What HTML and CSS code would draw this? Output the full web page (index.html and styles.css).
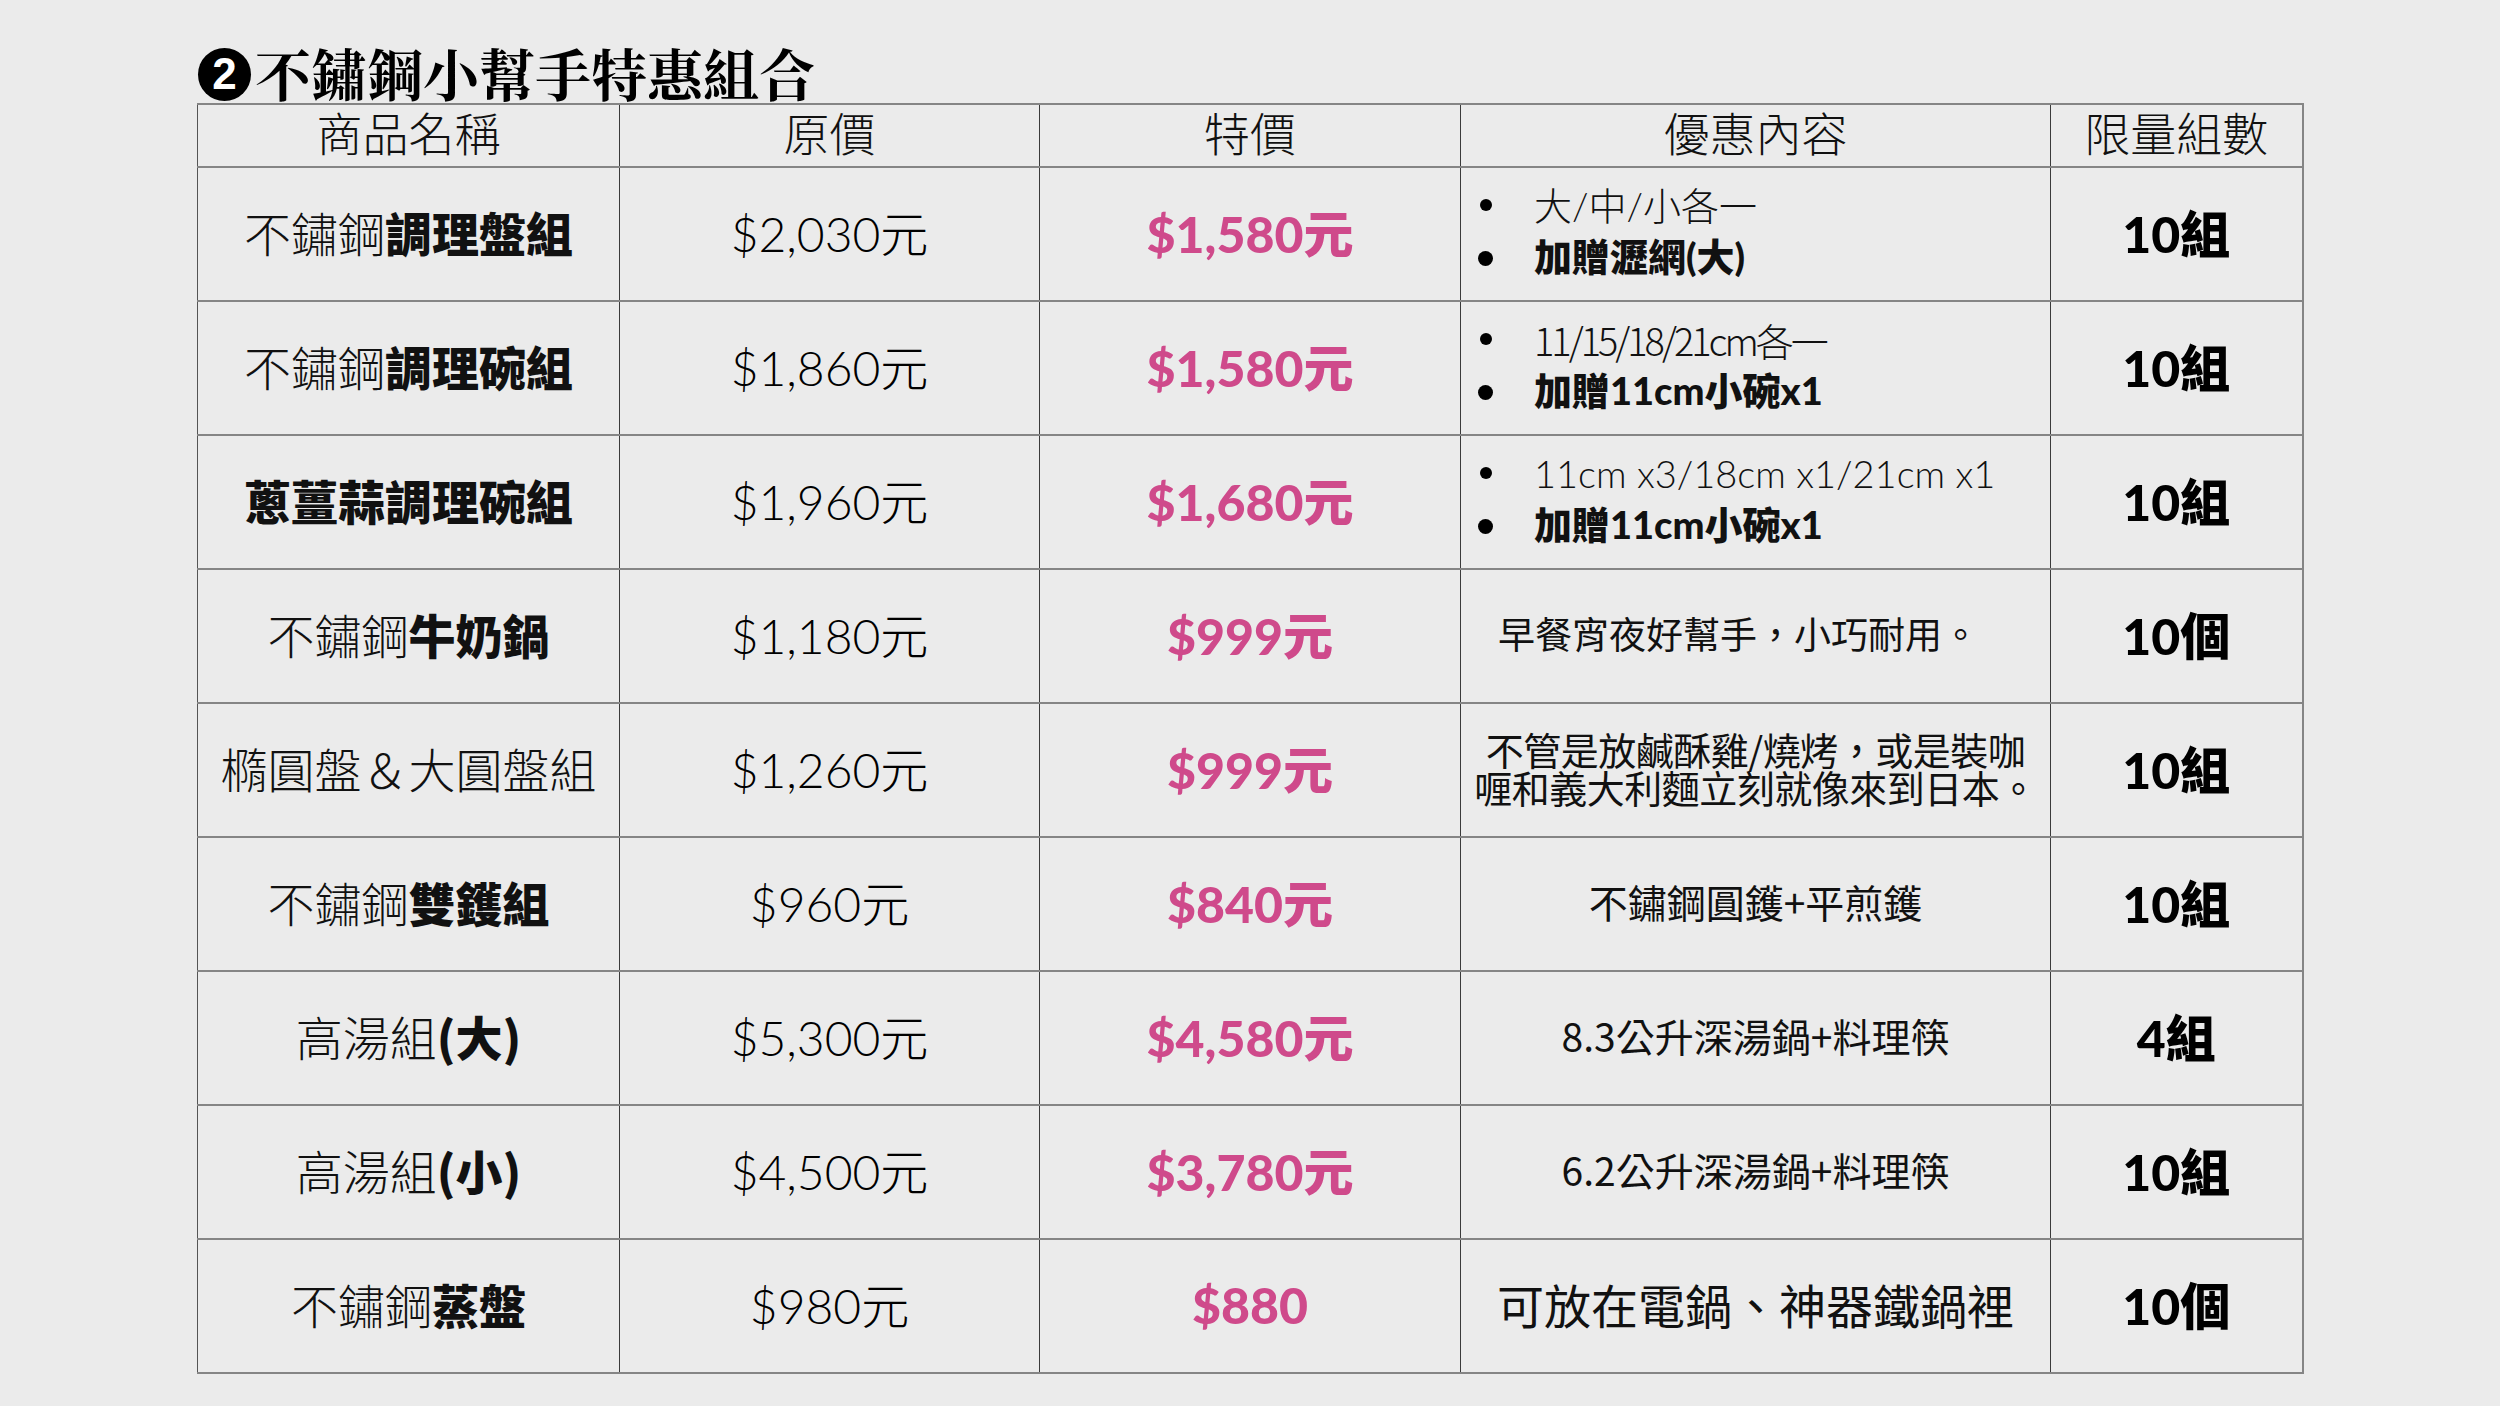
FILE: index.html
```html
<!DOCTYPE html>
<html lang="zh-Hant">
<head>
<meta charset="utf-8">
<title>不鏽鋼小幫手特惠組合</title>
<link rel="stylesheet" href="styles.css">
</head>
<body>
<div class="page">
  <h1 class="title"><span class="num">2</span>不鏽鋼小幫手特惠組合</h1>
  <table class="deals">
    <colgroup>
      <col class="c-name"><col class="c-orig"><col class="c-sale"><col class="c-desc"><col class="c-limit">
    </colgroup>
    <thead>
      <tr><th>商品名稱</th><th>原價</th><th>特價</th><th>優惠內容</th><th>限量組數</th></tr>
    </thead>
    <tbody>
      <tr>
        <td class="name">不鏽鋼<b>調理盤組</b></td>
        <td class="orig">$2,030元</td>
        <td class="sale">$1,580元</td>
        <td class="desc list"><ul><li>大/中/小各一</li><li class="strong">加贈瀝網(大)</li></ul></td>
        <td class="limit">10組</td>
      </tr>
      <tr>
        <td class="name">不鏽鋼<b>調理碗組</b></td>
        <td class="orig">$1,860元</td>
        <td class="sale">$1,580元</td>
        <td class="desc list"><ul><li class="narrow">11/15/18/21cm各一</li><li class="strong">加贈11cm小碗x1</li></ul></td>
        <td class="limit">10組</td>
      </tr>
      <tr>
        <td class="name"><b>蔥薑蒜調理碗組</b></td>
        <td class="orig">$1,960元</td>
        <td class="sale">$1,680元</td>
        <td class="desc list"><ul><li>11cm x3/18cm x1/21cm x1</li><li class="strong">加贈11cm小碗x1</li></ul></td>
        <td class="limit">10組</td>
      </tr>
      <tr>
        <td class="name">不鏽鋼<b>牛奶鍋</b></td>
        <td class="orig">$1,180元</td>
        <td class="sale">$999元</td>
        <td class="desc small offset">早餐宵夜好幫手，小巧耐用。</td>
        <td class="limit">10個</td>
      </tr>
      <tr>
        <td class="name">橢圓盤＆大圓盤組</td>
        <td class="orig">$1,260元</td>
        <td class="sale">$999元</td>
        <td class="desc tight">不管是放鹹酥雞/燒烤，或是裝咖<br>喱和義大利麵立刻就像來到日本。</td>
        <td class="limit">10組</td>
      </tr>
      <tr>
        <td class="name">不鏽鋼<b>雙鑊組</b></td>
        <td class="orig">$960元</td>
        <td class="sale">$840元</td>
        <td class="desc mid">不鏽鋼圓鑊+平煎鑊</td>
        <td class="limit">10組</td>
      </tr>
      <tr>
        <td class="name">高湯組<b>(大)</b></td>
        <td class="orig">$5,300元</td>
        <td class="sale">$4,580元</td>
        <td class="desc mid">8.3公升深湯鍋+料理筷</td>
        <td class="limit">4組</td>
      </tr>
      <tr>
        <td class="name">高湯組<b>(小)</b></td>
        <td class="orig">$4,500元</td>
        <td class="sale">$3,780元</td>
        <td class="desc mid">6.2公升深湯鍋+料理筷</td>
        <td class="limit">10組</td>
      </tr>
      <tr>
        <td class="name">不鏽鋼<b>蒸盤</b></td>
        <td class="orig">$980元</td>
        <td class="sale plain">$880</td>
        <td class="desc large">可放在電鍋、神器鐵鍋裡</td>
        <td class="limit">10個</td>
      </tr>
    </tbody>
  </table>
</div>
</body>
</html>
```
FILE: styles.css
```css
html, body {
  margin: 0;
  padding: 0;
  background: #ebebeb;
}

body {
  font-family: "Noto Sans CJK TC", "Noto Sans", sans-serif;
  color: #111;
}

.page {
  padding: 44px 0 0 197px;
}

.title {
  margin: 0 0 3px;
  height: 56px;
  display: flex;
  align-items: center;
  font-family: "Noto Serif CJK TC", "Noto Sans CJK TC", serif;
  font-size: 56px;
  line-height: 56px;
  font-weight: 700;
  color: #000;
}

.num {
  display: inline-flex;
  align-items: center;
  justify-content: center;
  width: 53px;
  height: 53px;
  margin: 4px 4px 0 1px;
  border-radius: 50%;
  background: #000;
  color: #fff;
  font-family: "Liberation Sans", "DejaVu Sans", sans-serif;
  font-weight: 700;
  font-size: 44px;
  line-height: 1;
}

.deals {
  border-collapse: collapse;
  table-layout: fixed;
  width: 2105px;
}

.c-name { width: 422px; }
.c-orig { width: 420px; }
.c-sale { width: 421px; }
.c-desc { width: 590px; }
.c-limit { width: 252px; }

.deals th,
.deals td {
  padding: 0 0 6px;
  text-align: center;
  vertical-align: middle;
  border-top: 2px solid #858585;
  border-bottom: 2px solid #858585;
  border-left: 1px solid #3a3a3a;
  border-right: 1px solid #3a3a3a;
}

.deals th:last-child,
.deals td:last-child {
  border-right: 2px solid #858585;
}

.deals th:first-child,
.deals td:first-child {
  border-left: 1px solid #555;
}

.deals thead tr {
  height: 63px;
}

.deals th {
  padding-bottom: 10px;
  font-size: 46px;
  font-weight: 300;
  line-height: 1;
  color: #111;
}

.deals tbody tr {
  height: 134px;
}

.name {
  font-size: 47px;
  font-weight: 300;
  white-space: nowrap;
}

.name b {
  font-weight: 900;
}

.orig {
  font-family: "Lato", "Noto Sans CJK TC", sans-serif;
  font-weight: 300;
  font-size: 48px;
  color: #000;
}

.sale {
  font-family: "Lato", "Noto Sans CJK TC", sans-serif;
  font-weight: 900;
  font-size: 50px;
  color: #cf4a8b;
}

.sale.plain {
  padding-bottom: 2px;
}

.limit {
  font-family: "Lato", "Noto Sans CJK TC", sans-serif;
  font-weight: 900;
  font-size: 50px;
  color: #000;
}

.desc {
  color: #111;
}

.desc.small {
  font-size: 37px;
  font-weight: 400;
}

.desc.offset {
  padding-right: 34px;
}

.desc.mid {
  font-size: 39px;
  font-weight: 400;
}

.desc.large {
  font-size: 47px;
  font-weight: 400;
}

.desc.tight {
  padding-bottom: 4px;
  font-size: 38px;
  line-height: 38px;
  font-weight: 400;
  white-space: nowrap;
  letter-spacing: -0.5px;
}

.desc.list {
  text-align: left;
}

.desc.list ul {
  list-style: none;
  margin: 0;
  padding: 0 0 0 73px;
}

.desc.list li {
  position: relative;
  font-family: "Lato", "Noto Sans CJK TC", sans-serif;
  font-size: 38px;
  font-weight: 300;
  line-height: 51px;
  white-space: nowrap;
}

.desc.list li.narrow {
  font-family: "Noto Sans CJK TC", sans-serif;
  letter-spacing: -3px;
}

.desc.list li::before {
  content: "";
  position: absolute;
  left: -54px;
  top: 50%;
  width: 12px;
  height: 12px;
  margin-top: -7px;
  border-radius: 50%;
  background: #000;
}

.desc.list li.strong {
  font-weight: 900;
}

.desc.list li.strong::before {
  width: 15px;
  height: 15px;
  margin-top: -6px;
  left: -56px;
}
```
